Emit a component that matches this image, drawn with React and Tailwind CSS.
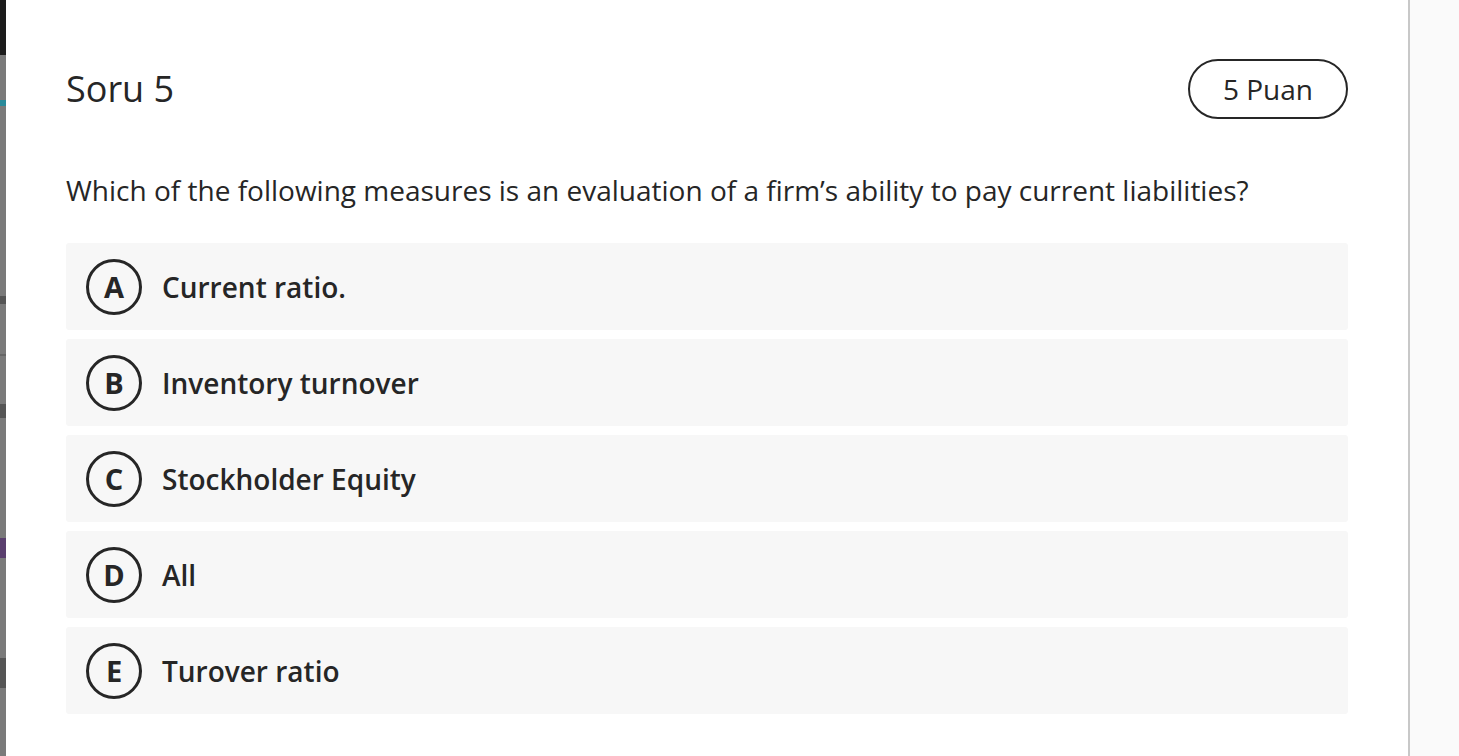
export default function App() {
  const options = [
    { key: "A", text: "Current ratio." },
    { key: "B", text: "Inventory turnover" },
    { key: "C", text: "Stockholder Equity" },
    { key: "D", text: "All" },
    { key: "E", text: "Turover ratio" },
  ];

  return (
    <div
      className="flex h-[756px] w-full overflow-hidden bg-white text-[#262626]"
      style={{ fontFamily: '"Open Sans", "Noto Sans", sans-serif' }}
    >
      {/* cut-off strip of the page behind */}
      <div className="flex w-[6px] shrink-0 flex-col bg-[#7a7a7a]">
        <div className="h-[55px] bg-[#1c1c1c]" />
        <div className="mt-[45px] h-[6px] bg-[#2a8a9a]" />
        <div className="mt-[190px] h-[8px] bg-[#555]" />
        <div className="mt-[50px] h-[2px] bg-[#666]" />
        <div className="mt-[48px] h-[14px] bg-[#555]" />
        <div className="mt-[120px] h-[20px] bg-[#5a3f6e]" />
        <div className="mt-[100px] h-[30px] bg-[#555]" />
      </div>

      <div className="flex w-[1402px] shrink-0 flex-col px-[60px] pt-[59px]">
        <div className="flex items-center justify-between">
          <h1 className="text-[36px] font-medium leading-none">Soru 5</h1>
          <div className="flex h-[60px] w-[160px] items-center justify-center rounded-full border-2 border-[#262626] text-[28px] font-medium">
            5 Puan
          </div>
        </div>

        <p className="mt-[52px] text-[28px] leading-[38px]">
          Which of the following measures is an evaluation of a firm’s ability to pay current liabilities?
        </p>

        <div className="mt-[34px] flex flex-col gap-[9px]">
          {options.map((o) => (
            <div key={o.key} className="flex h-[87px] items-center gap-[20px] rounded-[3px] bg-[#f7f7f7] px-[20px]">
              <div className="flex h-[56px] w-[56px] items-center justify-center rounded-full border-[3px] border-[#262626] text-[29px] font-bold leading-none">
                {o.key}
              </div>
              <span className="text-[28px] font-semibold">{o.text}</span>
            </div>
          ))}
        </div>
      </div>

      <div className="w-[2px] shrink-0 bg-[#c8c8c8]" />
      <div className="flex-1 bg-[#fafafa]" />
    </div>
  );
}
